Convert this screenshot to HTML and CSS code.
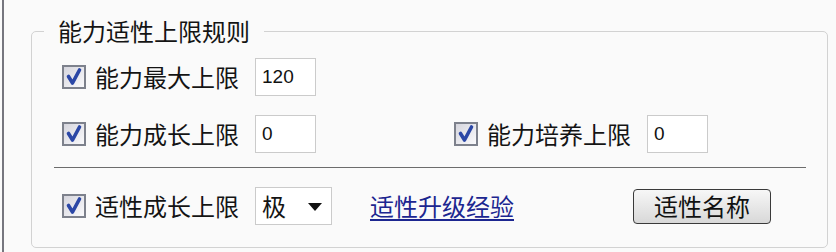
FILE: index.html
```html
<!DOCTYPE html>
<html lang="zh-CN">
<head>
<meta charset="utf-8">
<title>能力适性上限规则</title>
<link rel="stylesheet" href="styles.css">
</head>
<body>
<div class="frame">
  <fieldset class="group">
    <legend class="legend">能力适性上限规则</legend>
    <div class="row row-first">
      <span class="check">
        <svg class="box" viewBox="0 0 24 24" width="24" height="24"><defs><linearGradient id="g1" x1="0" y1="0" x2="1" y2="1"><stop offset="0" stop-color="#d4d4dc"/><stop offset="1" stop-color="#fbfbfd"/></linearGradient></defs><rect x="1" y="1" width="22" height="22" fill="url(#g1)" stroke="#7d818c" stroke-width="2"/><path d="M6.5 11.5 L10.5 18 L17.5 5" fill="none" stroke="#2b47a6" stroke-width="3.6" stroke-linejoin="round" stroke-linecap="round"/></svg>
        <span class="text">能力最大上限</span>
      </span>
      <span class="field">120</span>
    </div>
    <div class="row row-second">
      <span class="check">
        <svg class="box" viewBox="0 0 24 24" width="24" height="24"><defs><linearGradient id="g2" x1="0" y1="0" x2="1" y2="1"><stop offset="0" stop-color="#d4d4dc"/><stop offset="1" stop-color="#fbfbfd"/></linearGradient></defs><rect x="1" y="1" width="22" height="22" fill="url(#g2)" stroke="#7d818c" stroke-width="2"/><path d="M6.5 11.5 L10.5 18 L17.5 5" fill="none" stroke="#2b47a6" stroke-width="3.6" stroke-linejoin="round" stroke-linecap="round"/></svg>
        <span class="text">能力成长上限</span>
      </span>
      <span class="field">0</span>
      <span class="check check-right">
        <svg class="box" viewBox="0 0 24 24" width="24" height="24"><defs><linearGradient id="g3" x1="0" y1="0" x2="1" y2="1"><stop offset="0" stop-color="#d4d4dc"/><stop offset="1" stop-color="#fbfbfd"/></linearGradient></defs><rect x="1" y="1" width="22" height="22" fill="url(#g3)" stroke="#7d818c" stroke-width="2"/><path d="M6.5 11.5 L10.5 18 L17.5 5" fill="none" stroke="#2b47a6" stroke-width="3.6" stroke-linejoin="round" stroke-linecap="round"/></svg>
        <span class="text">能力培养上限</span>
      </span>
      <span class="field">0</span>
    </div>
    <div class="sep"></div>
    <div class="row row-third">
      <span class="check">
        <svg class="box" viewBox="0 0 24 24" width="24" height="24"><defs><linearGradient id="g4" x1="0" y1="0" x2="1" y2="1"><stop offset="0" stop-color="#d4d4dc"/><stop offset="1" stop-color="#fbfbfd"/></linearGradient></defs><rect x="1" y="1" width="22" height="22" fill="url(#g4)" stroke="#7d818c" stroke-width="2"/><path d="M6.5 11.5 L10.5 18 L17.5 5" fill="none" stroke="#2b47a6" stroke-width="3.6" stroke-linejoin="round" stroke-linecap="round"/></svg>
        <span class="text">适性成长上限</span>
      </span>
      <span class="select"><span class="select-value">极</span><svg class="arrow" viewBox="0 0 14 8" width="14" height="8"><path d="M0 0 L14 0 L7 8 Z" fill="#111"/></svg></span>
      <a class="link" href="#">适性升级经验</a>
      <span class="button">适性名称</span>
    </div>
  </fieldset>
</div>
</body>
</html>
```

FILE: styles.css
```css
html, body {
  margin: 0;
  padding: 0;
  background: #fafafa;
}

body {
  width: 836px;
  height: 252px;
  overflow: hidden;
  font-family: "Noto Sans CJK SC", "Liberation Sans", sans-serif;
  color: #141414;
}

.frame {
  box-sizing: border-box;
  height: 252px;
  margin-left: 2px;
  border-left: 2px solid #76767e;
  padding: 18px 0 0 27px;
}

.group {
  box-sizing: border-box;
  width: 797px;
  margin: 0;
  padding: 0 0 22px 0;
  border: 1px solid #d2d2d2;
  border-radius: 5px;
}

.legend {
  margin-left: 12px;
  padding: 0 14px;
  font-size: 24px;
  line-height: 26px;
  color: #141414;
}

.row {
  display: flex;
  align-items: center;
  height: 38px;
  padding-left: 30px;
}

.row-first {
  margin-top: 14px;
}

.row-second {
  margin-top: 19px;
}

.row-third {
  margin-top: 19px;
}

.check {
  display: flex;
  align-items: center;
}

.box {
  display: block;
  flex: none;
}

.text {
  margin-left: 9px;
  width: 144px;
  font-size: 24px;
  line-height: 30px;
  white-space: nowrap;
}

.check-right {
  margin-left: 138px;
}

.field {
  box-sizing: border-box;
  width: 61px;
  height: 38px;
  margin-left: 16px;
  padding-left: 6px;
  border: 1px solid #cbcbcb;
  background: #ffffff;
  font-family: "Liberation Sans", sans-serif;
  font-size: 19px;
  line-height: 36px;
  color: #111;
}

.sep {
  height: 1px;
  margin: 14px 21px 0 22px;
  background: #6c6c6c;
}

.select {
  box-sizing: border-box;
  display: flex;
  align-items: center;
  width: 77px;
  height: 38px;
  margin-left: 16px;
  padding: 0 9px 0 6px;
  border: 1px solid #cbcbcb;
  background: #ffffff;
}

.select-value {
  flex: 1;
  font-size: 24px;
  line-height: 30px;
}

.arrow {
  display: block;
  margin-top: 2px;
}

.link {
  margin-left: 38px;
  font-size: 24px;
  line-height: 30px;
  color: #1c2690;
  text-decoration: underline;
  text-underline-offset: 3px;
}

.button {
  box-sizing: border-box;
  width: 138px;
  height: 35px;
  margin-left: 119px;
  border: 1px solid #3a3a3a;
  border-radius: 4px;
  background: linear-gradient(#f7f7f7, #e6e6e6 55%, #d8d8d8);
  text-align: center;
  font-size: 24px;
  line-height: 32px;
  color: #111;
}
```
